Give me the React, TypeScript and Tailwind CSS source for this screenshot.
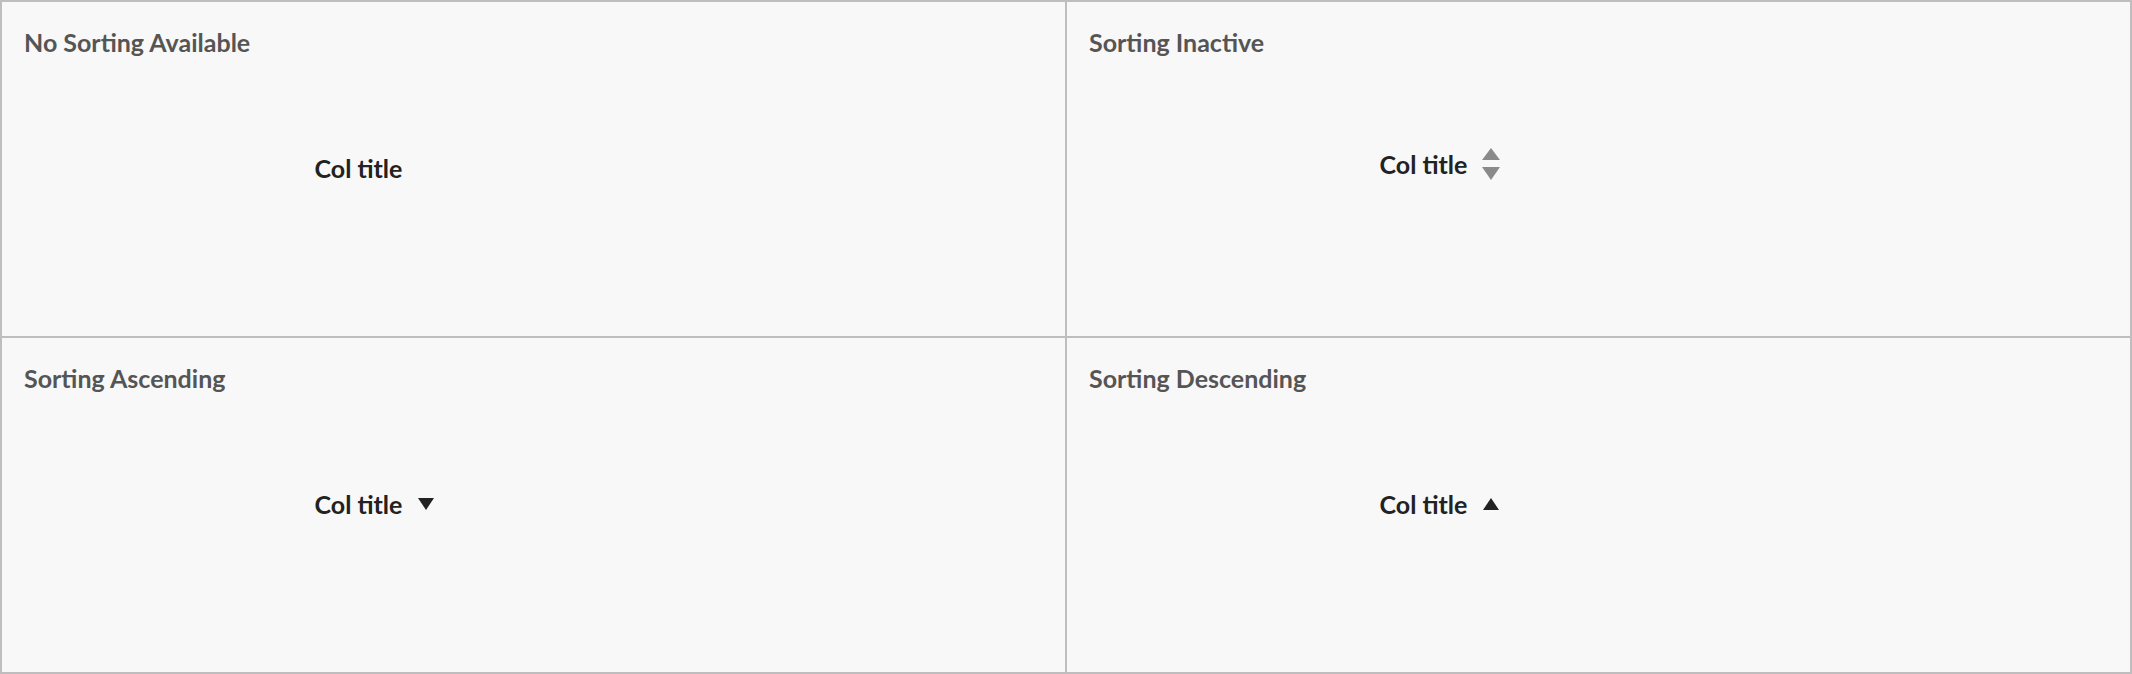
type SortState = "none" | "inactive" | "asc" | "desc";

const panels: { title: string; sort: SortState }[] = [
  { title: "No Sorting Available", sort: "none" },
  { title: "Sorting Inactive", sort: "inactive" },
  { title: "Sorting Ascending", sort: "asc" },
  { title: "Sorting Descending", sort: "desc" },
];

function SortIcon({ sort }: { sort: SortState }) {
  if (sort === "none") return null;

  if (sort === "inactive") {
    return (
      <span className="flex w-[18px] flex-col items-center gap-[7px]">
        <svg width="18" height="12" viewBox="0 0 18 12">
          <polygon points="9,0 18,12 0,12" fill="#8a8a8a" />
        </svg>
        <svg width="18" height="13" viewBox="0 0 18 13">
          <polygon points="0,0 18,0 9,13" fill="#8a8a8a" />
        </svg>
      </span>
    );
  }

  return (
    <span className="flex w-[18px] items-center justify-center">
      {sort === "asc" ? (
        <svg width="16" height="12" viewBox="0 0 16 12">
          <polygon points="0,0 16,0 8,12" fill="#222222" />
        </svg>
      ) : (
        <svg width="16" height="12" viewBox="0 0 16 12">
          <polygon points="8,0 16,12 0,12" fill="#222222" />
        </svg>
      )}
    </span>
  );
}

function Panel({ title, sort }: { title: string; sort: SortState }) {
  return (
    <div className="flex h-[336px] flex-col border border-[#bfbdbd] pl-[22px] pr-[24px]">
      <h2 className="flex h-[62px] items-start pt-[28px] text-[25px] font-bold leading-none text-[#555555]">
        {title}
      </h2>
      <div className="flex flex-1 items-center">
        <div className="mx-auto w-[438px] pl-[1px]">
          <div
            className={
              sort === "inactive"
                ? "mb-[11px] flex items-center gap-[15px]"
                : "mb-[3px] flex items-center gap-[15px]"
            }
          >
            <span className="text-[25px] font-bold leading-[32px] text-[#222222]">
              Col title
            </span>
            <SortIcon sort={sort} />
          </div>
        </div>
      </div>
      <div className="h-[62px]" />
    </div>
  );
}

export default function App() {
  return (
    <div
      className="grid h-[674px] w-[2132px] grid-cols-2 border border-[#bfbdbd] bg-[#f8f8f8]"
      style={{ fontFamily: "Lato, 'Noto Sans', sans-serif" }}
    >
      {panels.map((p) => (
        <Panel key={p.title} title={p.title} sort={p.sort} />
      ))}
    </div>
  );
}
